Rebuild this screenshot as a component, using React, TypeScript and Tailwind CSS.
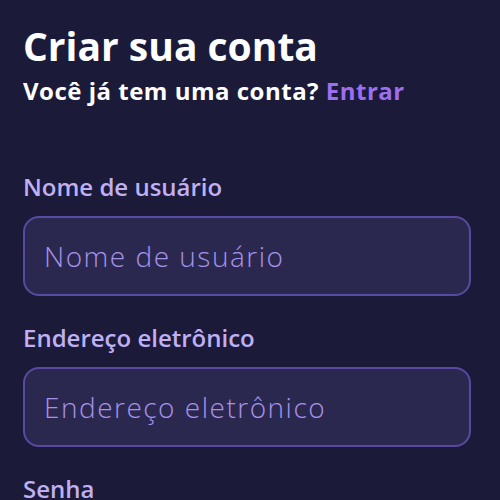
export default function App() {
  return (
    <div
      className="min-h-screen w-full bg-[#1b1a39] pl-[23px] pr-[29px] pt-[23px] text-white"
      style={{ fontFamily: '"Open Sans", "Noto Sans", sans-serif' }}
    >
      <h1 className="text-[39px] leading-[46px] font-bold text-white">Criar sua conta</h1>
      <p className="mt-[7px] text-[24px] leading-[30px] font-bold tracking-[0.5px] text-white">
        Você já tem uma conta? <span className="text-[#9d6ff0]">Entrar</span>
      </p>

      <form className="mt-[66px] flex flex-col">
        <Field label="Nome de usuário" placeholder="Nome de usuário" />
        <Field label="Endereço eletrônico" placeholder="Endereço eletrônico" />
        <label className="block text-[24px] leading-[30px] font-semibold text-[#bfb0f3]">Senha</label>
      </form>
    </div>
  );
}

function Field({ label, placeholder }: { label: string; placeholder: string }) {
  return (
    <div className="mb-[27px] flex flex-col gap-[14px]">
      <label className="text-[24px] leading-[30px] font-semibold text-[#bfb0f3]">{label}</label>
      <input
        type="text"
        placeholder={placeholder}
        className="h-[80px] w-full rounded-[16px] border-2 border-[#5a49a3] bg-[#2b284f] px-[19px] text-[28px] font-light tracking-[1.5px] text-white outline-none placeholder:text-[#a692ea]"
      />
    </div>
  );
}
